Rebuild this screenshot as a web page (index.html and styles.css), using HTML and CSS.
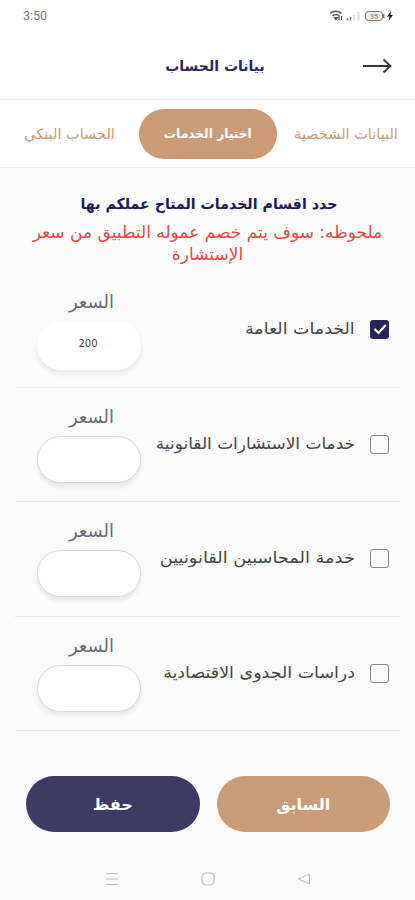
FILE: index.html
```html
<!DOCTYPE html>
<html lang="ar" dir="rtl">
<head>
<meta charset="utf-8">
<title>بيانات الحساب</title>
<link rel="stylesheet" href="styles.css">
</head>
<body>
<div class="status" dir="ltr">
  <span class="clock">3:50</span>
  <svg class="status-icons" width="68" height="16" viewBox="0 0 68 16">
    <path d="M0 5.500Q5.500 1 11.500 5.500M2.500 8Q6 5 9.500 8" fill="none" stroke="#555" stroke-width="1.600"/>
    <path d="M4 9.500h4l-2 2.500zM9 8v4M11.500 8v4" fill="#555" stroke="#555" stroke-width="1"/>
    <path d="M17.500 10v2.500M20.500 9v3.500" stroke="#777" stroke-width="1.500"/>
    <path d="M24 7v5.500M28.500 4v8.500" stroke="#ddd" stroke-width="2"/>
    <rect x="35.500" y="3.500" width="17" height="9" rx="3" fill="#eee" stroke="#777"/>
    <path d="M53.700 6v4" stroke="#777" stroke-width="1.500"/>
    <text x="44" y="10.500" class="battery-text">35</text>
    <path d="M61 3l-4 5.500h2.500l-1 4.500 4.500-6h-2.500z" fill="#222"/>
  </svg>
</div>
<header class="topbar">
  <svg class="arrow" width="30" height="18" viewBox="0 0 30 18"><path d="M1 9H28M21.500 2.500L28.500 9L21.500 15.500" fill="none" stroke="#333" stroke-width="1.800"/></svg>
  <h1>بيانات الحساب</h1>
</header>
<nav class="tabs">
  <a class="tab"><span class="fit">البيانات الشخصية</span></a>
  <a class="tab active"><span class="fit">اختيار الخدمات</span></a>
  <a class="tab"><span class="fit">الحساب البنكي</span></a>
</nav>
<main>
  <h2><span class="fit">حدد اقسام الخدمات المتاح عملكم بها</span></h2>
  <p class="note">ملحوظه: سوف يتم خصم عموله التطبيق من سعر<br>الإستشارة</p>
  <ul class="services">
    <li class="service">
      <span class="box checked"><svg width="18" height="18" viewBox="0 0 18 18"><path d="M3.500 9L7.500 13L14.800 5" fill="none" stroke="#fff" stroke-width="2.200"/></svg></span>
      <span class="name"><span class="fit">الخدمات العامة</span></span>
      <span class="price"><span class="price-label">السعر</span><span class="field filled">200</span></span>
    </li>
    <li class="service">
      <span class="box"></span>
      <span class="name"><span class="fit">خدمات الاستشارات القانونية</span></span>
      <span class="price"><span class="price-label">السعر</span><span class="field"></span></span>
    </li>
    <li class="service">
      <span class="box"></span>
      <span class="name"><span class="fit">خدمة المحاسبين القانونيين</span></span>
      <span class="price"><span class="price-label">السعر</span><span class="field"></span></span>
    </li>
    <li class="service">
      <span class="box"></span>
      <span class="name"><span class="fit">دراسات الجدوى الاقتصادية</span></span>
      <span class="price"><span class="price-label">السعر</span><span class="field"></span></span>
    </li>
  </ul>
</main>
<div class="actions">
  <button class="back">السابق</button>
  <button class="save">حفظ</button>
</div>
<footer class="navbar">
  <svg width="14" height="14" viewBox="0 0 14 14"><path d="M12.500 2V12L1.500 7Z" fill="none" stroke="#bbb" stroke-linejoin="round"/></svg>
  <svg width="14" height="14" viewBox="0 0 14 14"><rect x="1" y="1" width="12" height="12" rx="4" fill="none" stroke="#bbb" stroke-width="1.200"/></svg>
  <svg width="14" height="14" viewBox="0 0 14 14"><path d="M1 1.500H13M1 7H13M1 12.500H13" stroke="#bbb" stroke-width="1.200"/></svg>
</footer>
</body>
</html>
```
FILE: styles.css
```css
* { box-sizing: border-box; }
body { margin: 0; width: 415px; height: 900px; overflow: hidden; background: #fbfbfb; font-family: "DejaVu Sans", sans-serif; color: #444; display: flex; flex-direction: column; }
h1, h2, p, ul { margin: 0; padding: 0; }
.fit { display: inline-block; white-space: nowrap; }
.status { height: 32px; background: #fff; display: flex; justify-content: space-between; padding: 8px 17px 0 23px; }
.clock { font: 12.500px/16px Roboto, sans-serif; color: #777; }
.battery-text { font: 7px Roboto, sans-serif; fill: #777; text-anchor: middle; }
.topbar { height: 68px; background: #fff; border-bottom: 1px solid #eee; display: grid; grid-template-columns: 54px 1fr 69px; align-items: center; }
.arrow { margin-right: 23px; }
h1 { font-size: 14px; text-align: center; color: #29245c; }
.tabs { height: 68px; background: #fff; border-bottom: 1px solid #eee; display: grid; grid-template-columns: 138px 138px 139px; align-items: center; }
.tab { height: 50px; border-radius: 25px; font-size: 14.500px; color: #cb9b75; display: flex; align-items: center; justify-content: center; }
.active { background: #cb9b75; color: #fff; font-weight: bold; font-size: 13px; }
.active .fit { transform: scaleX(0.94); }
main { text-align: center; padding: 24px 15px 0; height: 564px; }
h2 { font-size: 15px; line-height: 24px; color: #201b57; }
h2 .fit { transform: translateX(1px) scaleX(0.945); }
.note { font-size: 17px; line-height: 22px; margin: 5px -5px 0; color: #e14b43; height: 52px; }
.services { list-style: none; }
.service { height: 114.500px; border-bottom: 1px solid #e5e7e7; display: flex; padding: 0 11px 0 22px; }
.service:first-child { border-color: #efefef; }
.box { width: 19px; height: 19px; margin: 47px 0 0 15px; border: 1px solid #888; border-radius: 3px; flex: none; }
.checked { background: #29245c; border: 0; }
.name { flex: 1; text-align: right; font-size: 16px; padding-top: 44px; line-height: 24px; min-width: 0; }
.name .fit { transform: scaleX(1.09); transform-origin: right; }
.service:nth-child(2) .name .fit { transform: scaleX(1.06); }
.service:nth-child(3) .name .fit { transform: scaleX(1.11); }
.price { width: 104px; flex: none; display: flex; flex-direction: column; }
.price-label { font-size: 18px; line-height: 24px; margin-top: 17px; padding-left: 5px; color: #666b73; }
.field { height: 47px; margin-top: 7px; border: 1px solid #d8d8d8; border-radius: 24px; background: #fff; box-shadow: 0 4px 5px #00000014; font: 10px/43px "DejaVu Sans", sans-serif; padding-right: 2px; }
.filled { border-color: #fff; height: 49px; }
.actions { display: flex; gap: 17px; padding: 44px 25px 0 26px; height: 124px; }
button { flex: 1; height: 56px; border: 0; border-radius: 28px; color: #fff; font: bold 16px "DejaVu Sans", sans-serif; }
.back { background: #cb9b75; }
.save { background: #3d3a65; }
.navbar { display: flex; justify-content: center; gap: 82px; margin-top: 16px; }
```
